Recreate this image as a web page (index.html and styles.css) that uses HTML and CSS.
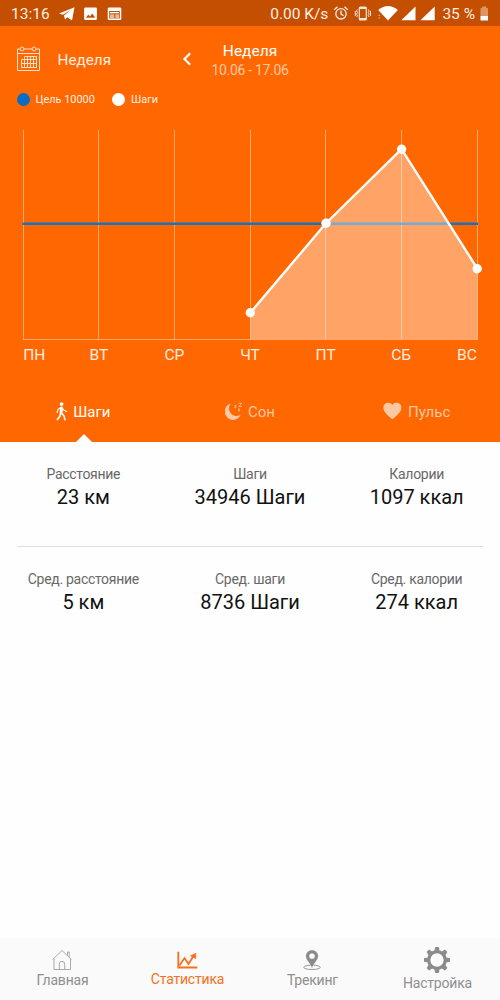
FILE: index.html
```html
<!DOCTYPE html>
<html lang="ru">
<head>
<meta charset="utf-8">
<title>Статистика</title>
<link rel="stylesheet" href="styles.css">
</head>
<body>
<div class="app">
  <div class="statusbar">
    <span class="clock">13:16</span>
    <svg class="left-icons" width="66" height="26" viewBox="0 0 66 26" fill="#fff">
      <path d="M1 13.6 16.5 7.2 14 20.4 9.3 17.2 7 19.6 6 15.6 13 9.8 5 14.8z"/>
      <path fill-rule="evenodd" d="M27.5 7.5h10a1.4 1.4 0 0 1 1.4 1.400v9.800a1.400 1.400 0 0 1-1.400 1.400h-10a1.400 1.400 0 0 1-1.400-1.400v-9.800a1.400 1.400 0 0 1 1.400-1.400zM28 17.700h9.200l-3-4.200-2.300 3-1.600-1.900z"/>
      <path fill-rule="evenodd" d="M51 7.500h11a1.300 1.300 0 0 1 1.300 1.300v10a1.300 1.300 0 0 1-1.300 1.300H51a1.300 1.300 0 0 1-1.300-1.300v-10A1.300 1.300 0 0 1 51 7.500zM51.200 11v7.600h10.600V11z"/>
      <path d="M52 12h9v1.300h-9z"/>
      <path opacity=".6" d="M52 14.300h4.300v4H52zM57.300 14.300H61v4h-3.700z"/>
    </svg>
    <span class="speed">0.00 K/s</span>
    <svg class="right-icons" width="106" height="26" viewBox="0 0 106 26" fill="none" stroke="#fff">
      <g opacity=".9" stroke-width="1.300"><circle cx="8" cy="13.800" r="5.200"/><path d="M8 10.500v3.600l2.500 1.500M1.200 9.800l3.300-3M14.800 9.800l-3.300-3"/></g>
      <g opacity=".85" stroke-width="1.200"><rect x="26.300" y="7" width="7" height="13" rx="1"/><path d="M26.300 8h7M26.300 19h7" stroke-width="1.800"/><path d="m24.400 9.500-.9 1.500 1 1.500-1 1.500 1 1.500-.9 1.500M35.300 9.500l.9 1.500-1 1.500 1 1.500-1 1.500.9 1.500M22.300 11v5M37.500 11v5" stroke-width="1"/></g>
      <g fill="#fff" stroke="none"><path d="M45.200 10Q55 2 64.800 10L55 20.500z"/><path d="M82.500 6.500v13.700H68.300zM101.700 6.500v13.700H87.500z"/><path opacity=".5" d="m45 16 1.300-1.500 1.300 1.500zM45 17.500h2.600L46.300 19z"/></g>
    </svg>
    <span class="percent">35 %</span>
    <svg class="battery" width="9" height="26" viewBox="0 0 9 26" fill="#fff"><path opacity=".4" d="M2.200 5.500h4V7h1.300a.5.5 0 0 1 .5.500V15H.500V7.500A.5.500 0 0 1 1 7h1.200z"/><path d="M.5 15H8v4a.5.500 0 0 1-.5.500H1a.5.500 0 0 1-.5-.5z"/></svg>
  </div>

  <div class="hero">
    <div class="toolbar">
      <svg class="calendar" width="24" height="26" viewBox="0 0 24 26" fill="none" stroke="#ffe0c8" stroke-width="1">
        <path d="M4 3H1.500v21.500h22V3H20M8 3h8M1.500 7.500h22"/><circle cx="6" cy="3" r="1.900"/><circle cx="18" cy="3" r="1.900"/>
        <path d="M8.500 10.500h12v11h-15v-8h15M5.500 17.500h15M8.500 10.500v11M11.500 10.500v11M14.500 10.500v11M17.500 10.500v11M20.500 10.500v11"/>
      </svg>
      <span class="period">Неделя</span>
      <svg class="back" width="10" height="14" viewBox="0 0 10 14" fill="none" stroke="#fff" stroke-width="2.200"><path d="M8.200 1.300 2.500 7l5.700 5.700"/></svg>
      <div class="range"><div class="range-title">Неделя</div><div class="range-dates">10.06 - 17.06</div></div>
    </div>
    <div class="legend">
      <i class="dot goal"></i><span class="goal-label">Цель 10000</span>
      <i class="dot steps"></i><span class="steps-label">Шаги</span>
    </div>
    <svg class="chart" width="500" height="218" viewBox="0 125 500 218" fill="none">
      <path class="grid" d="M23.500 130v209.500M98.500 130v209.500M174.500 130v209.500M250.500 130v209.500M325.500 130v209.500M401.500 130v209.500M477.500 130v209.500M23 339.500h455"/>
      <path d="M22.500 223.800H478" stroke="#1673bd" stroke-width="2.400"/>
      <path d="M250.500 312.600 326 223.200l75.500-74 76 119.600V339h-227z" fill="#fff" fill-opacity=".4"/>
      <path d="M250.500 312.600 326 223.200l75.500-74 76 119.600" stroke="#fff" stroke-width="2.400"/>
      <g fill="#fff"><circle cx="250.300" cy="312.700" r="4.700"/><circle cx="326" cy="223.200" r="4.700"/><circle cx="401.600" cy="149.200" r="4.700"/><circle cx="477.200" cy="268.800" r="4.700"/></g>
    </svg>
    <div class="days"><span>ПН</span><span>ВТ</span><span>СР</span><span>ЧТ</span><span>ПТ</span><span>СБ</span><span>ВС</span></div>
    <div class="tabs">
      <div class="tab active">
        <svg class="walk" width="12" height="19" viewBox="0 0 12 19" fill="none" stroke="#fff" stroke-linecap="round" stroke-linejoin="round"><circle cx="5.600" cy="2.100" r="1.900" fill="#fff" stroke="none"/><path d="m5.500 6-.5 5" stroke-width="2.800"/><path d="M4.800 5.500 2 7.500l-.8 3M6.300 6l1.700 2.300 2.700 1.200" stroke-width="1.200"/><path d="M4.700 11 3.900 14.300l-2.500 3.300M5.800 11.300l2.200 2.700.9 3.600" stroke-width="1.600"/></svg>
        <span>Шаги</span>
      </div>
      <div class="tab">
        <svg class="moon" width="18" height="19" viewBox="0 0 18 19" fill="#fff"><path d="M5.800 1.400A8.400 8.400 0 1 0 15.900 12.600 7.600 7.600 0 0 1 5.800 1.400z"/><path d="M13.500 1.200h3.200L13.800 4.500h3.200M9.300 3.500h2L9.500 5.700h2M13 7h1.800L13.200 8.800h1.800" fill="none" stroke="#fff" stroke-width=".8"/></svg>
        <span>Сон</span>
      </div>
      <div class="tab pulse">
        <svg class="heart" width="19" height="18" viewBox="0 0 19 18" fill="#fff"><path d="M9.400 17.300C4 12.800.4 9.600.4 5.700.4 2.800 2.600.8 5.200.8c1.700 0 3.300.8 4.200 2.200C10.300 1.600 11.900.8 13.600.8c2.600 0 4.800 2 4.800 4.900 0 3.900-3.600 7.100-9 11.600z"/></svg>
        <span>Пульс</span>
      </div>
    </div>
  </div>

  <div class="stats">
    <div class="stat"><div class="name">Расстояние</div><div class="value">23 км</div></div>
    <div class="stat"><div class="name">Шаги</div><div class="value">34946 Шаги</div></div>
    <div class="stat"><div class="name">Калории</div><div class="value">1097 ккал</div></div>
  </div>
  <div class="divider"></div>
  <div class="stats">
    <div class="stat"><div class="name">Сред. расстояние</div><div class="value">5 км</div></div>
    <div class="stat"><div class="name">Сред. шаги</div><div class="value">8736 Шаги</div></div>
    <div class="stat"><div class="name">Сред. калории</div><div class="value">274 ккал</div></div>
  </div>

  <div class="bottom-nav">
    <div class="nav-item">
      <svg width="22" height="22" viewBox="0 0 22 22" fill="none" stroke="#a0a0a0" stroke-width=".9"><path d="M1.500 10.700 11 1.500l9.500 9.200M16.500 6.200V3h1.700v5M3 9.500v11h16.500v-11M8.300 20.500V15a2.700 2.700 0 0 1 5.400 0v5.500"/></svg>
      <span>Главная</span>
    </div>
    <div class="nav-item current">
      <svg width="22" height="22" viewBox="0 0 22 22" fill="none" stroke="#f9701a" stroke-width="1.800"><path d="M2.300 2.800v15.700H21.300"/><path d="m3.500 16.500 5-7.500 4 6 5-8"/><path d="M19.800 4.300v5.500l-5.500-3z" fill="#f9701a" stroke-width=".5"/></svg>
      <span>Статистика</span>
    </div>
    <div class="nav-item">
      <svg width="22" height="22" viewBox="0 0 22 22"><ellipse cx="11" cy="18.300" rx="8.300" ry="2.200" fill="none" stroke="#8c8c8c" stroke-width=".9"/><path fill="#8a8a8a" stroke="#fafafa" stroke-width=".3" fill-rule="evenodd" d="M11 .900a6.200 6.200 0 0 1 6.200 6.200C17.200 11 13 14 11 19.200 9 14 4.800 11 4.800 7.100A6.200 6.200 0 0 1 11 .900zm0 3.500a2.700 2.700 0 1 0 0 5.400 2.700 2.700 0 0 0 0-5.400z"/></svg>
      <span>Трекинг</span>
    </div>
    <div class="nav-item settings">
      <svg width="26" height="28" viewBox="-13 -14 26 28" fill="#8a8a8a"><circle r="8.300" fill="none" stroke="#8a8a8a" stroke-width="3.200"/><g id="teeth"><path id="tooth" d="M-2.600-9.200-1.700-13h3.400l.9 3.800z"/><use href="#tooth" transform="rotate(45)"/><use href="#tooth" transform="rotate(90)"/><use href="#tooth" transform="rotate(135)"/></g><use href="#teeth" transform="rotate(180)"/></svg>
      <span>Настройка</span>
    </div>
  </div>
</div>
</body>
</html>
```
FILE: styles.css
```css
* { box-sizing: border-box; }
body { margin: 0; font-family: Roboto, "Noto Sans", sans-serif; background: #fff; }
svg { display: block; flex: none; }
span { white-space: nowrap; }
.app { width: 500px; height: 1000px; display: flex; flex-direction: column; overflow: hidden; background: #fefefe; }

.statusbar { height: 26px; flex: none; background: #c44f00; display: flex; align-items: center; padding: 1px 11px 0 11px; color: #ffeee2; font-size: 15.5px; line-height: 26px; }
.clock { width: 47px; }
.speed { margin-left: auto; margin-right: 5px; }
.left-icons, .right-icons { margin-top: -1px; }
.percent { margin-left: 3px; margin-right: 5px; }

.hero { height: 416px; flex: none; background: #ff6701; color: #ffeee2; display: flex; flex-direction: column; }
.toolbar { height: 61px; display: flex; align-items: flex-start; padding-left: 16px; }
.calendar { margin-top: 20px; }
.period { width: 124px; margin-left: 17.5px; margin-top: 24px; font-size: 15.3px; line-height: 20px; }
.back { margin-top: 26px; }
.range { width: 118px; margin-top: 15px; margin-left: -0.5px; text-align: center; white-space: nowrap; }
.range-title { font-size: 15.5px; line-height: 20px; color: #fff; }
.range-dates { font-size: 14px; letter-spacing: -0.3px; line-height: 18px; color: #ffc8a2; }
.legend { height: 38px; display: flex; align-items: flex-start; padding: 6px 0 0 17px; font-size: 10.9px; line-height: 14px; }
.dot { width: 13px; height: 13px; border-radius: 50%; }
.goal { background: #0b6cc4; }
.steps { background: #fff; }
.goal-label { width: 76.5px; margin-left: 5.5px; }
.steps-label { margin-left: 6px; }
.chart { flex: none; }
.grid { stroke: #fff; stroke-opacity: .42; }
.days { display: flex; justify-content: center; margin-top: 2px; font-size: 15.5px; line-height: 20px; }
.days span { width: 75.6px; text-align: center; }
.days span:first-child, .days span:last-child { width: 37.8px; }
.days span:first-child { text-align: left; }
.days span:last-child { text-align: right; }
.tabs { flex: 1; display: grid; grid-template-columns: repeat(3, 1fr); font-size: 15px; line-height: 20px; }
.tab { display: flex; justify-content: center; align-items: flex-start; gap: 5px; padding-top: 37px; color: #ffc8a2; position: relative; }
.tab.active { color: #fff; }
.tab.active::after { content: ""; position: absolute; bottom: 0; left: 75.5px; border: 8px solid transparent; border-top: 0; border-bottom-color: #fff; }
.pulse { gap: 6px; }
.moon, .heart { opacity: .64; }

.stats { display: grid; grid-template-columns: repeat(3, 1fr); padding-top: 22px; height: 104px; flex: none; text-align: center; white-space: nowrap; }
.name { font-size: 14px; letter-spacing: -0.3px; line-height: 20px; color: #686868; }
.value { font-size: 20px; line-height: 26px; color: #111; }
.divider { height: 1px; flex: none; margin: 0 17px; background: #dfdfdf; }

.bottom-nav { margin-top: auto; height: 62px; flex: none; background: #fafafa; display: grid; grid-template-columns: repeat(4, 1fr); }
.nav-item { display: flex; flex-direction: column; align-items: center; padding-top: 11px; color: #8f8f8f; font-size: 14px; letter-spacing: -0.2px; line-height: 18px; }
.nav-item svg { margin-left: -2px; }
.current { color: #f9701a; }
.current svg { margin-bottom: -1px; }
.settings { padding-top: 8px; }
```
